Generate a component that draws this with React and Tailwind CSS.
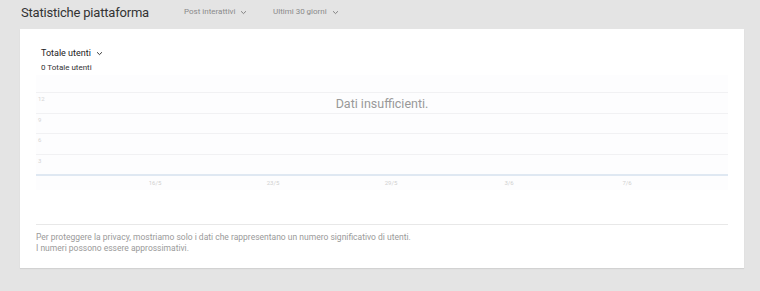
import React from "react";

const Chevron = ({ className = "", color = "#555" }) => (
  <svg className={className} viewBox="0 0 10 6" fill="none" stroke={color} strokeWidth="1.3">
    <path d="M1.5 1.2 L5 4.6 L8.5 1.2" />
  </svg>
);

export default function App() {
  const rows = ["12", "9", "6", "3"];
  const xs = ["16/5", "23/5", "29/5", "3/6", "7/6"];
  return (
    <div className="w-[760px] h-[291px] bg-[#e4e4e4] overflow-hidden" style={{ fontFamily: "Roboto, 'Liberation Sans', sans-serif" }}>
      <div className="h-[29px] flex items-center pl-[21px] pb-[5px]">
        <div className="text-[13px] tracking-[-0.2px] text-[#333] leading-none w-[163px]">Statistiche piattaforma</div>
        <div className="flex items-center text-[8px] text-[#8a8a8a] w-[89px]">
          Post interattivi
          <Chevron className="w-[7px] h-[5px] ml-[5px]" color="#777" />
        </div>
        <div className="flex items-center text-[8px] text-[#8a8a8a]">
          Ultimi 30 giorni
          <Chevron className="w-[7px] h-[5px] ml-[5px]" color="#777" />
        </div>
      </div>
      <div className="ml-[20px] w-[724px] h-[239px] bg-white shadow-[0_1px_1px_rgba(0,0,0,0.08)] pt-[18px] px-4">
        <div className="pl-[5px] flex items-center text-[9px] leading-[12px] text-[#222]">
          Totale utenti
          <Chevron className="w-[7px] h-[5px] ml-[5px]" color="#222" />
        </div>
        <div className="pl-[5px] mt-[4px] text-[8px] leading-[10px] text-[#333]">0 Totale utenti</div>
        <div className="mt-[2px] h-[115px] bg-[#fdfdfe] pt-[17px] relative">
          {rows.map((r) => (
            <div key={r} className="h-[20.5px] border-t border-[#f1f1f3] pl-[2px] pt-[2px] text-[6px] leading-[8px] text-[#d4d4d4]">
              {r}
            </div>
          ))}
          <div className="border-t-2 border-[#dfe8f2]" />
          <div className="flex pl-[60px] pt-[3px] text-[6px] leading-[8px] text-[#d0d0d0]">
            {xs.map((x) => (
              <div key={x} className="w-[118px] text-center">{x}</div>
            ))}
          </div>
          <div className="absolute left-0 right-0 top-[21px] text-center text-[12.5px] leading-[15px] text-[#999]">
            Dati insufficienti.
          </div>
        </div>
        <div className="mt-[34px] border-t border-[#e8e8e8] pt-[7px] pb-[14px] text-[8.5px] leading-[11px] text-[#9a9a9a]">
          <div>Per proteggere la privacy, mostriamo solo i dati che rappresentano un numero significativo di utenti.</div>
          <div>I numeri possono essere approssimativi.</div>
        </div>
      </div>
    </div>
  );
}
